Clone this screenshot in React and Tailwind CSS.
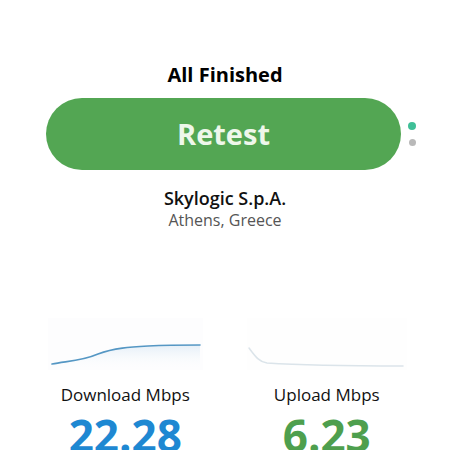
import React from 'react';

const DownloadChart = () => (
  <svg width="155" height="52" viewBox="0 0 155 52" className="block">
    <defs>
      <linearGradient id="dlFill" x1="0" y1="0" x2="0" y2="1">
        <stop offset="0%" stopColor="#c8def0" stopOpacity="0.45" />
        <stop offset="100%" stopColor="#ffffff" stopOpacity="0" />
      </linearGradient>
    </defs>
    <path d="M4 46 C 20 43, 34 43, 50 36 C 66 30, 82 29, 100 28 C 120 27, 140 27, 152 27 L 152 52 L 4 52 Z" fill="url(#dlFill)" />
    <path d="M4 46 C 20 43, 34 43, 50 36 C 66 30, 82 29, 100 28 C 120 27, 140 27, 152 27" fill="none" stroke="#5597c4" strokeWidth="1.6" strokeLinecap="round" />
  </svg>
);

const UploadChart = () => (
  <svg width="160" height="52" viewBox="0 0 160 52" className="block">
    <path d="M2 30 C 8 38, 12 44, 20 45 C 50 47, 110 48, 156 48" fill="none" stroke="#dbe4ea" strokeWidth="1.5" strokeLinecap="round" />
  </svg>
);

export default function App() {
  return (
    <div className="w-[450px] h-[450px] overflow-hidden bg-white" style={{ fontFamily: '"Open Sans", sans-serif' }}>
      <div className="pt-[61px] flex flex-col items-center">
        <h1 className="text-[20px] leading-[28px] font-bold text-black">All Finished</h1>

        <div className="mt-[9px] w-[355px] ml-[-3px] relative">
          <button className="w-full h-[72px] rounded-full bg-[#53a653] text-[#eef7ea] text-[29px] font-bold flex items-center justify-center">
            Retest
          </button>
          <div className="absolute left-[362px] top-[24px] flex flex-col items-center gap-[9px]">
            <span className="w-[8px] h-[8px] rounded-full bg-[#3fbf97]" />
            <span className="w-[7px] h-[7px] rounded-full bg-[#b9b9b9]" />
          </div>
        </div>

        <div className="mt-[16px] text-[18px] leading-[24px] font-semibold text-[#111]">
          Skylogic S.p.A.
        </div>
        <div className="text-[16px] leading-[20px] text-[#555]">
          Athens, Greece
        </div>
      </div>

      <div className="mt-[88px] ml-[47px] w-[358px] grid grid-cols-2 gap-[45px]">
        <div className="flex flex-col items-center">
          <div className="bg-[#fdfdfe]"><DownloadChart /></div>
          <div className="mt-[14px] text-[17px] leading-[22px] text-[#111]">Download Mbps</div>
          <div className="mt-[3px] text-[44px] leading-[52px] font-bold text-[#1e88d2]">22.28</div>
        </div>
        <div className="flex flex-col items-center">
          <div className="bg-[#fefefe]"><UploadChart /></div>
          <div className="mt-[14px] text-[17px] leading-[22px] text-[#111]">Upload Mbps</div>
          <div className="mt-[3px] text-[44px] leading-[52px] font-bold text-[#4e9f4e]">6.23</div>
        </div>
      </div>
    </div>
  );
}
